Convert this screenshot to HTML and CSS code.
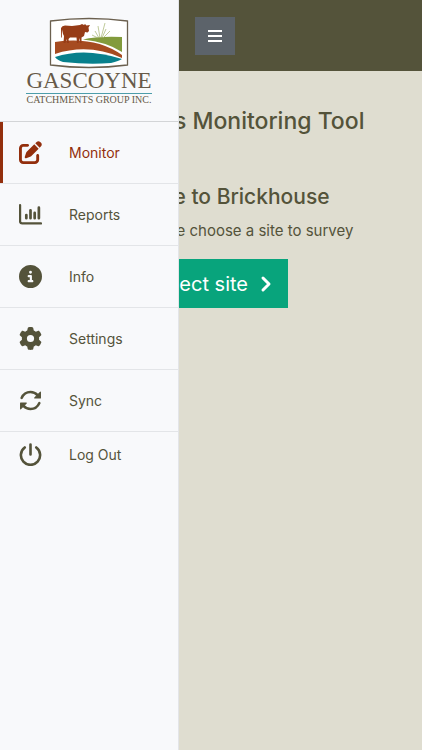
FILE: index.html
```
<!DOCTYPE html>
<html lang="en">

<head>
    <meta charset="UTF-8">
    <meta name="viewport" content="width=device-width, initial-scale=1.0">
    <title>Rangelands Monitoring Tool</title>
    <link rel="stylesheet" href="styles.css">
</head>

<body>
    <aside class="sidebar">
        <div class="logo">
            <svg class="logo-picture" viewBox="0 0 80 52" aria-hidden="true">
                <path d="M1.5 4Q40 -1 78.5 4V48Q40 53 1.5 48Z" fill="#fff" stroke="#6b604f" stroke-width="1.3" />
                <path d="M34 22.500Q48 19 73 20V35Q58 25 34 22.500Z" fill="#829b3c" />
                <path d="M6 25Q46 19 73 38V41Q40 26 6 37Z" fill="#a64b20" />
                <path d="M6 41Q36 28 73 43V46Q40 51 6 46Z" fill="#fff" />
                <path d="M6 40Q36 30 73 42Q70 44 62 46Q40 48 14 45Q8 43 6 40Z" fill="#08808c" />
                <path d="M50 21L46 14M51 21L49 9M52 21L56 6M53 21L57 12M54 21L61 14M49 21L43 18" fill="none" stroke="#a5b36e" stroke-width=".7" />
                <path d="M12 11Q13 8.500 16 8.500L23 9L31 8L33 7L35 8L36 7L37.500 8.500L41 8L39.500 10.500L40 14L38.500 15.500L36 15L35 19L32.500 20.500V26H31L30.500 21L29.500 26H28L27.500 20.500L21 20.500L19.500 22L20 26H18L17.500 22L16.500 26H14.500L15 19L14 17L13 12.500L12.800 20L12 21Z" fill="#963c17" />
            </svg>
            <span class="logo-name">GASCOYNE</span>
            <span class="logo-sub">CATCHMENTS GROUP INC.</span>
        </div>
        <nav class="menu">
            <a class="menu-item active" href="#monitor">
                <svg class="icon" viewBox="0 0 512 512" aria-hidden="true">
                    <path d="M471.6 21.7c-21.9-21.9-57.3-21.9-79.2 0L362.3 51.7l97.9 97.9 30.1-30.1c21.9-21.9 21.9-57.3 0-79.2L471.6 21.7zm-299.2 220c-6.1 6.1-10.8 13.6-13.5 21.9l-29.6 88.8c-2.9 8.6-.6 18.1 5.8 24.6s15.9 8.7 24.6 5.8l88.8-29.6c8.2-2.7 15.7-7.4 21.9-13.5L437.7 172.3 339.7 74.3 172.4 241.7zM96 64C43 64 0 107 0 160V416c0 53 43 96 96 96H352c53 0 96-43 96-96V320c0-17.7-14.3-32-32-32s-32 14.3-32 32v96c0 17.7-14.3 32-32 32H96c-17.7 0-32-14.3-32-32V160c0-17.7 14.3-32 32-32h96c17.7 0 32-14.3 32-32s-14.3-32-32-32H96z" />
                </svg>
                Monitor
            </a>
            <a class="menu-item" href="#reports">
                <svg class="icon icon-line" viewBox="0 0 22 22" aria-hidden="true">
                    <path d="M1 2V17.5Q1 19.5 3 19.5H21" stroke-width="2.2" />
                    <path d="M7 11.5V14.5M11 7V14.5M15 9.5V14.5M19 4.5V14.5" stroke-width="2.6" />
                </svg>
                Reports
            </a>
            <a class="menu-item" href="#info">
                <svg class="icon" viewBox="0 0 512 512" aria-hidden="true">
                    <path d="M256 512A256 256 0 1 0 256 0a256 256 0 1 0 0 512zM216 336h24V272H216c-13.3 0-24-10.7-24-24s10.7-24 24-24h48c13.3 0 24 10.7 24 24v88h8c13.3 0 24 10.7 24 24s-10.7 24-24 24H216c-13.3 0-24-10.7-24-24s10.7-24 24-24zm40-208a32 32 0 1 1 0 64 32 32 0 1 1 0-64z" />
                </svg>
                Info
            </a>
            <a class="menu-item" href="#settings">
                <svg class="icon" viewBox="0 0 512 512" aria-hidden="true">
                    <path d="M495.9 166.6c3.2 8.7 .5 18.4-6.4 24.6l-43.3 39.4c1.1 8.3 1.7 16.8 1.7 25.4s-.6 17.1-1.7 25.4l43.3 39.4c6.9 6.2 9.6 15.9 6.4 24.6c-4.4 11.9-9.7 23.3-15.8 34.3l-4.7 8.1c-6.6 11-14 21.4-22.1 31.2c-5.9 7.2-15.7 9.6-24.5 6.8l-55.7-17.7c-13.4 10.3-28.2 18.9-44 25.4l-12.5 57.1c-2 9.1-9 16.3-18.2 17.8c-13.8 2.3-28 3.5-42.5 3.5s-28.7-1.2-42.5-3.5c-9.2-1.5-16.2-8.7-18.2-17.8l-12.5-57.1c-15.8-6.5-30.6-15.1-44-25.4L83.1 425.9c-8.8 2.8-18.6 .3-24.5-6.8c-8.1-9.8-15.5-20.2-22.1-31.2l-4.7-8.1c-6.1-11-11.4-22.4-15.8-34.3c-3.2-8.7-.5-18.4 6.4-24.6l43.3-39.4C64.6 273.1 64 264.6 64 256s.6-17.1 1.7-25.4L22.4 191.2c-6.9-6.2-9.6-15.9-6.4-24.6c4.4-11.9 9.7-23.3 15.8-34.3l4.7-8.1c6.6-11 14-21.4 22.1-31.2c5.9-7.2 15.7-9.6 24.5-6.8l55.7 17.7c13.4-10.3 28.2-18.9 44-25.4l12.5-57.1c2-9.1 9-16.3 18.2-17.8C227.3 1.2 241.5 0 256 0s28.7 1.2 42.5 3.5c9.2 1.5 16.2 8.7 18.2 17.8l12.5 57.1c15.8 6.5 30.6 15.1 44 25.4l55.7-17.7c8.8-2.8 18.6-.3 24.5 6.8c8.1 9.8 15.5 20.2 22.1 31.2l4.7 8.1c6.1 11 11.4 22.4 15.8 34.3zM256 336a80 80 0 1 0 0-160 80 80 0 1 0 0 160z" />
                </svg>
                Settings
            </a>
            <a class="menu-item" href="#sync">
                <svg class="icon icon-line" viewBox="0 0 22 22" aria-hidden="true">
                    <path d="M2.5 8.5Q5 2.8 11 2.8Q15 2.8 18 6M19.5 13.5Q17 19.2 11 19.2Q7 19.2 4 16" stroke-width="2.4" />
                    <path class="solid" d="M20.5 3V8.5H15ZM1.5 19V13.5H7Z" stroke-linejoin="round" />
                </svg>
                Sync
            </a>
            <a class="menu-item last" href="#logout">
                <svg class="icon icon-line" viewBox="0 0 22 22" aria-hidden="true">
                    <path d="M11 1.5V11M5.5 4.3A9.2 9.2 0 1 0 16.5 4.3" stroke-width="2.5" />
                </svg>
                Log Out
            </a>
        </nav>
    </aside>

    <header class="topbar">
        <button class="toggle" type="button" aria-label="Toggle menu">
            <svg class="toggle-icon" viewBox="0 0 14 14" aria-hidden="true">
                <path d="M0 2H14M0 7H14M0 12H14" />
            </svg>
        </button>
    </header>

    <main class="content">
        <h1>Rangelands Monitoring Tool</h1>
        <h2>Welcome to Brickhouse</h2>
        <p>To begin, please choose a site to survey</p>
        <button class="select-site" type="button">
            Select site
            <svg class="chevron" viewBox="0 0 12 18" aria-hidden="true">
                <path d="M3 3L9 9L3 15" />
            </svg>
        </button>
    </main>
</body>

</html>
```
FILE: styles.css
```
:root {
    --olive: #54533a;
    --rust: #932f0d;
    --sand: #dfddd0;
    --panel: #f8f9fb;
    --line: #e3e5e8;
    --green: #08a47c;
}

* {
    box-sizing: border-box;
}

body {
    margin: 0;
    min-height: 100vh;
    background: var(--sand);
    color: var(--olive);
    font-family: Inter, "Liberation Sans", sans-serif;
}

/* menu drawer, open over the page */
.sidebar {
    position: fixed;
    top: 0;
    bottom: 0;
    left: 0;
    z-index: 10;
    width: 179px;
    background: var(--panel);
    border-right: 1px solid var(--line);
}

.logo {
    display: flex;
    flex-direction: column;
    align-items: center;
    height: 122px;
    padding-top: 17px;
    border-bottom: 1px solid #d3d5d7;
    color: #675a48;
    font-family: "Liberation Serif", serif;
    white-space: nowrap;
}

.logo-picture {
    width: 80px;
    height: 52px;
}

.logo-name {
    border-bottom: 1px solid #4c9daa;
    font-size: 23px;
    line-height: 24px;
}

.logo-sub {
    font-size: 10px;
    line-height: 12px;
}

.menu-item {
    display: flex;
    align-items: center;
    gap: 27px;
    height: 62px;
    padding-left: 19px;
    border-bottom: 1px solid var(--line);
    color: var(--olive);
    font-size: 14px;
    text-decoration: none;
}

.menu-item.active {
    box-shadow: inset 3px 0 var(--rust);
    color: var(--rust);
}

.menu-item.last {
    height: 45px;
    border-bottom: 0;
}

.icon {
    width: 23px;
    height: 23px;
    fill: currentColor;
}

.icon-line {
    fill: none;
    stroke: currentColor;
    stroke-linecap: round;
}

.icon-line .solid {
    fill: currentColor;
}

.topbar {
    display: flex;
    align-items: center;
    height: 71px;
    padding-left: 195px;
    background: var(--olive);
}

.toggle {
    display: flex;
    align-items: center;
    justify-content: center;
    width: 40px;
    height: 38px;
    padding: 0;
    border: 0;
    background: #5c636a;
}

.toggle-icon {
    width: 14px;
    height: 14px;
    stroke: #fff;
    stroke-width: 2;
}

.content {
    display: flex;
    flex-direction: column;
    align-items: center;
    padding-top: 36px;
    white-space: nowrap;
}

h1,
h2,
p {
    margin: 0;
    font-weight: 500;
}

h1 {
    margin-bottom: 48px;
    font-size: 23px;
    line-height: 28px;
}

h2 {
    margin-bottom: 8px;
    font-size: 21px;
    line-height: 28px;
}

p {
    margin-bottom: 16px;
    font-size: 15px;
    font-weight: 400;
    line-height: 24px;
}

.select-site {
    display: flex;
    align-items: center;
    gap: 12px;
    height: 49px;
    padding: 0 16px;
    border: 0;
    background: var(--green);
    color: #fff;
    font-family: inherit;
    font-size: 20px;
}

.chevron {
    width: 12px;
    height: 18px;
    fill: none;
    stroke: #fff;
    stroke-width: 3;
    stroke-linecap: round;
    stroke-linejoin: round;
}
```
